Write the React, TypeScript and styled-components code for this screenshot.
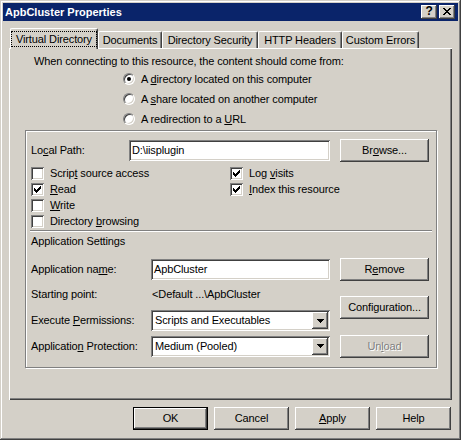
import * as React from 'react';
import styled, { createGlobalStyle } from 'styled-components';

const GlobalStyle = createGlobalStyle`
  html, body {
    margin: 0;
    padding: 0;
    background: #d4d0c8;
  }
  * {
    box-sizing: border-box;
  }
`;

const raised = `
  box-shadow: inset -1px -1px #404040, inset 1px 1px #fff, inset -2px -2px #808080, inset 2px 2px #d4d0c8;
`;

const sunken = `
  box-shadow: inset 1px 1px #808080, inset -1px -1px #fff, inset 2px 2px #404040, inset -2px -2px #d4d0c8;
`;

const CloseGlyph = () => {
  const cells = [
    [0, 0, 2], [6, 0, 2],
    [1, 1, 2], [5, 1, 2],
    [2, 2, 4],
    [3, 3, 2],
    [2, 4, 4],
    [1, 5, 2], [5, 5, 2],
    [0, 6, 2], [6, 6, 2],
  ];
  return (
    <svg width="8" height="7" viewBox="0 0 8 7" shapeRendering="crispEdges">
      {cells.map(([x, y, w], i) => (
        <rect key={i} x={x} y={y} width={w} height="1" fill="#000" />
      ))}
    </svg>
  );
};

const CheckMark = () => {
  const tops = [5, 6, 7, 6, 5, 4, 3];
  return (
    <svg width="13" height="13" viewBox="0 0 13 13" shapeRendering="crispEdges">
      {tops.map((y, i) => (
        <rect key={i} x={3 + i} y={y} width="1" height="3" fill="#000" />
      ))}
    </svg>
  );
};

const DropArrow = () => (
  <svg width="7" height="4" viewBox="0 0 7 4" shapeRendering="crispEdges">
    <rect x="0" y="0" width="7" height="1" fill="#000" />
    <rect x="1" y="1" width="5" height="1" fill="#000" />
    <rect x="2" y="2" width="3" height="1" fill="#000" />
    <rect x="3" y="3" width="1" height="1" fill="#000" />
  </svg>
);

const tabs = [
  { label: 'Virtual Directory', width: 88, active: true },
  { label: 'Documents', width: 64 },
  { label: 'Directory Security', width: 96 },
  { label: 'HTTP Headers', width: 84 },
  { label: 'Custom Errors', width: 77 },
];

export default function App() {
  return (
    <>
      <GlobalStyle />
      <Window>
        <TitleBar>
          <Title>ApbCluster Properties</Title>
          <CaptionButtons>
            <CaptionButton>?</CaptionButton>
            <CaptionButton>
              <CloseGlyph />
            </CaptionButton>
          </CaptionButtons>
        </TitleBar>

        <Body>
          <TabRow>
            {tabs.map((t) => (
              <Tab key={t.label} $w={t.width} $active={t.active}>
                {t.active ? <Focus>{t.label}</Focus> : t.label}
              </Tab>
            ))}
          </TabRow>

          <Panel>
            <Intro>When connecting to this resource, the content should come from:</Intro>
            <RadioList>
              <RadioRow>
                <Radio $on />
                <span>A <u>d</u>irectory located on this computer</span>
              </RadioRow>
              <RadioRow>
                <Radio />
                <span>A <u>s</u>hare located on another computer</span>
              </RadioRow>
              <RadioRow>
                <Radio />
                <span>A redirection to a <u>U</u>RL</span>
              </RadioRow>
            </RadioList>

            <Group>
              <FormGrid $label={98} $rows="23px">
                <Label>Lo<u>c</u>al Path:</Label>
                <TextBox>D:\iisplugin</TextBox>
                <Button>Br<u>o</u>wse...</Button>
              </FormGrid>

              <CheckColumns>
                <CheckColumn>
                  <CheckRow>
                    <Box />
                    <span>Scrip<u>t</u> source access</span>
                  </CheckRow>
                  <CheckRow>
                    <Box><CheckMark /></Box>
                    <span><u>R</u>ead</span>
                  </CheckRow>
                  <CheckRow>
                    <Box />
                    <span><u>W</u>rite</span>
                  </CheckRow>
                  <CheckRow>
                    <Box />
                    <span>Directory <u>b</u>rowsing</span>
                  </CheckRow>
                </CheckColumn>
                <CheckColumn>
                  <CheckRow>
                    <Box><CheckMark /></Box>
                    <span>Log <u>v</u>isits</span>
                  </CheckRow>
                  <CheckRow>
                    <Box><CheckMark /></Box>
                    <span><u>I</u>ndex this resource</span>
                  </CheckRow>
                </CheckColumn>
              </CheckColumns>

              <Divider />
              <SectionTitle>Application Settings</SectionTitle>

              <FormGrid $label={120} $rows="23px 26px 27px 24px">
                <Label>Application na<u>m</u>e:</Label>
                <TextBox>ApbCluster</TextBox>
                <Button>R<u>e</u>move</Button>

                <Label>Starting point:</Label>
                <Value>{'<Default ...\\ApbCluster'}</Value>
                <Button $span={2}>Configuration...</Button>

                <Label>Execute <u>P</u>ermissions:</Label>
                <Select>
                  <span>Scripts and Executables</span>
                  <DropButton><DropArrow /></DropButton>
                </Select>

                <Label>Applicatio<u>n</u> Protection:</Label>
                <Select>
                  <span>Medium (Pooled)</span>
                  <DropButton><DropArrow /></DropButton>
                </Select>
                <Button $disabled>Un<u>l</u>oad</Button>
              </FormGrid>
            </Group>
          </Panel>

          <ButtonRow>
            <DialogButton $default>OK</DialogButton>
            <DialogButton>Cancel</DialogButton>
            <DialogButton><u>A</u>pply</DialogButton>
            <DialogButton>Help</DialogButton>
          </ButtonRow>
        </Body>
      </Window>
    </>
  );
}

const Window = styled.div`
  width: 461px;
  height: 440px;
  padding: 3px;
  display: flex;
  flex-direction: column;
  background: #d4d0c8;
  color: #000;
  font-family: "Liberation Sans", Arial, sans-serif;
  font-size: 11px;
  line-height: 13px;
  letter-spacing: -0.12px;
  box-shadow: inset -1px -1px #404040, inset 1px 1px #d4d0c8, inset -2px -2px #808080, inset 2px 2px #fff;
`;

const TitleBar = styled.div`
  height: 18px;
  display: flex;
  align-items: center;
  padding: 0 3px 0 2px;
  background: #0a246a;
`;

const Title = styled.div`
  flex: 1;
  color: #fff;
  font-weight: bold;
  font-size: 11px;
  letter-spacing: 0;
`;

const CaptionButtons = styled.div`
  display: flex;
  gap: 2px;
`;

const CaptionButton = styled.div`
  width: 16px;
  height: 14px;
  display: flex;
  align-items: center;
  justify-content: center;
  padding-bottom: 1px;
  background: #d4d0c8;
  font-weight: bold;
  font-size: 12px;
  ${raised}
`;

const Body = styled.div`
  flex: 1;
  display: flex;
  flex-direction: column;
  padding: 7px 6px 0 6px;
`;

const TabRow = styled.div`
  height: 20px;
  display: flex;
  align-items: flex-end;
  padding-left: 1px;
`;

const Tab = styled.div<{ $w: number; $active?: boolean }>`
  position: relative;
  z-index: ${(p) => (p.$active ? 1 : 0)};
  width: ${(p) => p.$w}px;
  height: ${(p) => (p.$active ? 21 : 17)}px;
  margin-bottom: ${(p) => (p.$active ? -1 : 0)}px;
  display: flex;
  align-items: center;
  justify-content: center;
  padding: ${(p) => (p.$active ? '2px 0 2px 0' : '1px 0 0 0')};
  background: #d4d0c8;
  border-top: 1px solid #fff;
  border-left: 1px solid #fff;
  border-right: 1px solid #404040;
  border-radius: 2px 2px 0 0;
  box-shadow: inset -1px 0 #808080;
  white-space: nowrap;
`;

const Focus = styled.span`
  flex: 1;
  align-self: stretch;
  display: flex;
  align-items: center;
  justify-content: center;
  border: 1px dotted #000;
`;

const Panel = styled.div`
  height: 352px;
  padding: 7px 15px 0 16px;
  background: #d4d0c8;
  box-shadow: inset 1px 1px #fff, inset -1px -1px #404040, inset -2px -2px #808080;
`;

const Intro = styled.div`
  padding-left: 9px;
`;

const RadioList = styled.div`
  margin: 1px 0 1px 98px;
`;

const RadioRow = styled.div`
  height: 20px;
  display: flex;
  align-items: center;
  gap: 6px;
`;

const Radio = styled.span<{ $on?: boolean }>`
  width: 12px;
  height: 12px;
  flex: none;
  display: flex;
  align-items: center;
  justify-content: center;
  border-radius: 50%;
  background: #fff;
  border: 1px solid;
  border-color: #808080 #fff #fff #808080;
  box-shadow: inset 1px 1px #404040, inset -1px -1px #d4d0c8;

  &::after {
    content: '';
    display: ${(p) => (p.$on ? 'block' : 'none')};
    width: 4px;
    height: 4px;
    border-radius: 50%;
    background: #000;
  }
`;

const Group = styled.div`
  height: 238px;
  padding: 8px 7px 0 5px;
  border: 1px solid #808080;
  box-shadow: inset 1px 1px #fff, 1px 1px #fff;
`;

const FormGrid = styled.div<{ $label: number; $rows: string }>`
  display: grid;
  grid-template-columns: ${(p) => p.$label}px ${(p) => 299 - p.$label}px 99px;
  grid-template-rows: ${(p) => p.$rows};
  align-items: center;
`;

const Label = styled.span`
  grid-column: 1;
  white-space: nowrap;
`;

const Value = styled.span`
  padding-left: 1px;
  white-space: nowrap;
`;

const TextBox = styled.div`
  grid-column: 2;
  height: 21px;
  display: flex;
  align-items: center;
  padding: 0 3px;
  background: #fff;
  ${sunken}
`;

const Select = styled.div`
  grid-column: 2;
  height: 21px;
  display: flex;
  align-items: center;
  justify-content: space-between;
  padding: 2px 2px 2px 4px;
  background: #fff;
  ${sunken}
`;

const DropButton = styled.span`
  width: 16px;
  height: 17px;
  display: flex;
  align-items: center;
  justify-content: center;
  background: #d4d0c8;
  ${raised}
`;

const Button = styled.div<{ $span?: number; $disabled?: boolean }>`
  grid-column: 3;
  grid-row: ${(p) => (p.$span ? `span ${p.$span}` : 'auto')};
  justify-self: end;
  width: 89px;
  height: 23px;
  display: flex;
  align-items: center;
  justify-content: center;
  background: #d4d0c8;
  color: ${(p) => (p.$disabled ? '#808080' : '#000')};
  text-shadow: ${(p) => (p.$disabled ? '1px 1px 0 #fff' : 'none')};
  ${raised}
`;

const CheckColumns = styled.div`
  display: flex;
  margin-top: 3px;
`;

const CheckColumn = styled.div`
  width: 200px;
`;

const CheckRow = styled.div`
  height: 16px;
  display: flex;
  align-items: center;
  gap: 6px;
`;

const Box = styled.span`
  width: 13px;
  height: 13px;
  flex: none;
  display: flex;
  background: #fff;
  ${sunken}
`;

const Divider = styled.div`
  height: 2px;
  margin: 1px -3px 0 -1px;
  border-top: 1px solid #808080;
  border-bottom: 1px solid #fff;
`;

const SectionTitle = styled.div`
  margin: 3px 0 10px;
`;

const ButtonRow = styled.div`
  display: flex;
  justify-content: flex-end;
  gap: 6px;
  margin-top: 7px;
  padding-right: 1px;
`;

const DialogButton = styled.div<{ $default?: boolean }>`
  width: 75px;
  height: 23px;
  display: flex;
  align-items: center;
  justify-content: center;
  background: #d4d0c8;
  box-shadow: ${(p) =>
    p.$default
      ? 'inset 0 0 0 1px #000, inset -2px -2px #404040, inset 2px 2px #fff, inset -3px -3px #808080'
      : 'inset -1px -1px #404040, inset 1px 1px #fff, inset -2px -2px #808080, inset 2px 2px #d4d0c8'};
`;
